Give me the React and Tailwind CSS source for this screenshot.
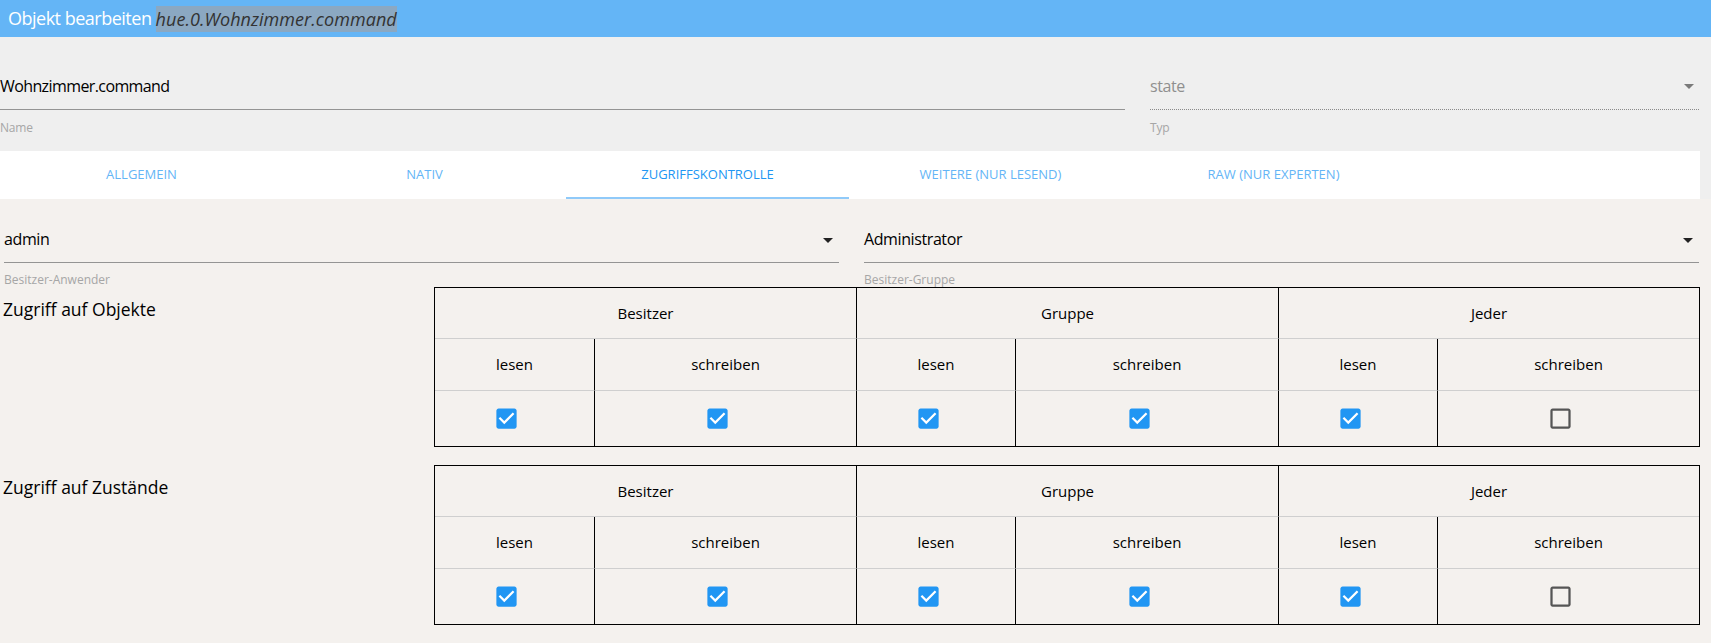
import React from 'react';

const tabs = ['Allgemein', 'Nativ', 'Zugriffskontrolle', 'Weitere (nur lesend)', 'Raw (nur Experten)'];

function ArrowDown({ color }) {
  return (
    <svg width="24" height="24" viewBox="0 0 24 24" className="shrink-0">
      <path d="M7 10l5 5 5-5z" fill={color} />
    </svg>
  );
}

function Box({ checked }) {
  if (checked) {
    return (
      <svg width="27" height="27" viewBox="0 0 24 24">
        <path d="M19 3H5c-1.11 0-2 .9-2 2v14c0 1.1.89 2 2 2h14c1.11 0 2-.9 2-2V5c0-1.1-.89-2-2-2z" fill="#2196f3" />
        <path d="M10 17l-5-5 1.41-1.41L10 14.17l7.59-7.59L19 8l-9 9z" fill="#ffffff" />
      </svg>
    );
  }
  return (
    <svg width="27" height="27" viewBox="0 0 24 24">
      <path d="M19 5v14H5V5h14m0-2H5c-1.1 0-2 .9-2 2v14c0 1.1.9 2 2 2h14c1.1 0 2-.9 2-2V5c0-1.1-.9-2-2-2z" fill="#555555" />
    </svg>
  );
}

function AccessTable({ title, values }) {
  const groups = ['Besitzer', 'Gruppe', 'Jeder'];
  return (
    <div className="flex">
      <div className="w-[434px] pl-[3px] pt-[11px] text-[17.5px] leading-[22px] text-black">{title}</div>
      <div className="w-[1266px] border border-black text-[15px] text-black grid grid-cols-[160px_262px_159px_263px_159px_261px]">
        {groups.map((g, i) => (
          <div
            key={g}
            className={`col-span-2 h-[51px] flex items-center justify-center border-b border-[#cfcfcf] ${i < 2 ? 'border-r border-r-black' : ''}`}
          >
            {g}
          </div>
        ))}
        {[0, 1, 2, 3, 4, 5].map(i => (
          <div
            key={'h' + i}
            className={`h-[52px] flex items-center justify-center border-b border-[#cfcfcf] ${i < 5 ? 'border-r border-r-black' : ''}`}
          >
            {i % 2 === 0 ? 'lesen' : 'schreiben'}
          </div>
        ))}
        {values.map((v, i) => (
          <div
            key={'c' + i}
            className={`h-[55px] flex items-center justify-center ${i < 5 ? 'border-r border-black' : ''}`}
          >
            <span className="mr-[16px] -mt-[1px] flex">
              <Box checked={v} />
            </span>
          </div>
        ))}
      </div>
    </div>
  );
}

export default function App() {
  const perms = [true, true, true, true, true, false];

  return (
    <div className="w-[1711px] h-[643px] overflow-hidden bg-[#efefef] font-['Open_Sans',sans-serif]">
      {/* Title bar */}
      <div className="h-[37px] flex items-center pl-[8px] bg-[#64b5f6] text-white text-[18px]">
        <span className="tracking-[-0.5px]">Objekt bearbeiten&nbsp;</span>
        <span className="italic bg-[#8ba8c2] text-[#333333] leading-[26px] tracking-[0.05px]">hue.0.Wohnzimmer.command</span>
      </div>

      {/* Name / Typ */}
      <div className="flex h-[114px]">
        <div className="w-[1125px] pt-[39px]">
          <div className="h-[34px] border-b border-[#949494] text-[16px] leading-[20px] text-black tracking-[-0.6px]">
            Wohnzimmer.command
          </div>
          <div className="mt-[10px] text-[12px] leading-[16px] text-[#a6a6a6] tracking-[-0.2px]">Name</div>
        </div>
        <div className="ml-[25px] w-[549px] pt-[39px]">
          <div className="h-[34px] flex justify-between border-b border-dotted border-[#8a8a8a] text-[16px] leading-[20px] text-[#8f8f8f] tracking-[-0.4px]">
            <span>state</span>
            <span className="-mt-[2px] -mr-[2px]"><ArrowDown color="#7a7a7a" /></span>
          </div>
          <div className="mt-[10px] text-[12px] leading-[16px] text-[#a6a6a6] tracking-[-0.2px]">Typ</div>
        </div>
      </div>

      {/* Tabs */}
      <div className="flex w-[1700px] h-[48px] bg-white">
        {tabs.map((t, i) => (
          <div
            key={t}
            className={`w-[283px] flex items-center justify-center text-[13px] uppercase ${
              i === 2 ? 'text-[#2196f3] border-b-2 border-[#90caf9] pt-[2px]' : 'text-[#64b5f6]'
            }`}
          >
            {t}
          </div>
        ))}
      </div>

      {/* Access control */}
      <div className="bg-[#f4f1ee] h-[444px]">
        <div className="flex pt-[30px]">
          <div className="ml-[4px] w-[835px]">
            <div className="h-[34px] flex justify-between border-b border-[#949494] text-[16px] leading-[20px] text-black tracking-[-0.4px]">
              <span>admin</span>
              <span className="-mt-[1px] -mr-[1px]"><ArrowDown color="#222222" /></span>
            </div>
            <div className="mt-[9px] text-[12px] leading-[15px] text-[#a6a6a6]">Besitzer-Anwender</div>
          </div>
          <div className="ml-[25px] w-[835px]">
            <div className="h-[34px] flex justify-between border-b border-[#949494] text-[16px] leading-[20px] text-black tracking-[-0.4px]">
              <span>Administrator</span>
              <span className="-mt-[1px] -mr-[1px]"><ArrowDown color="#222222" /></span>
            </div>
            <div className="mt-[9px] text-[12px] leading-[15px] text-[#a6a6a6]">Besitzer-Gruppe</div>
          </div>
        </div>

        <AccessTable title="Zugriff auf Objekte" values={perms} />
        <div className="h-[18px]" />
        <AccessTable title="Zugriff auf Zustände" values={perms} />
      </div>
    </div>
  );
}
